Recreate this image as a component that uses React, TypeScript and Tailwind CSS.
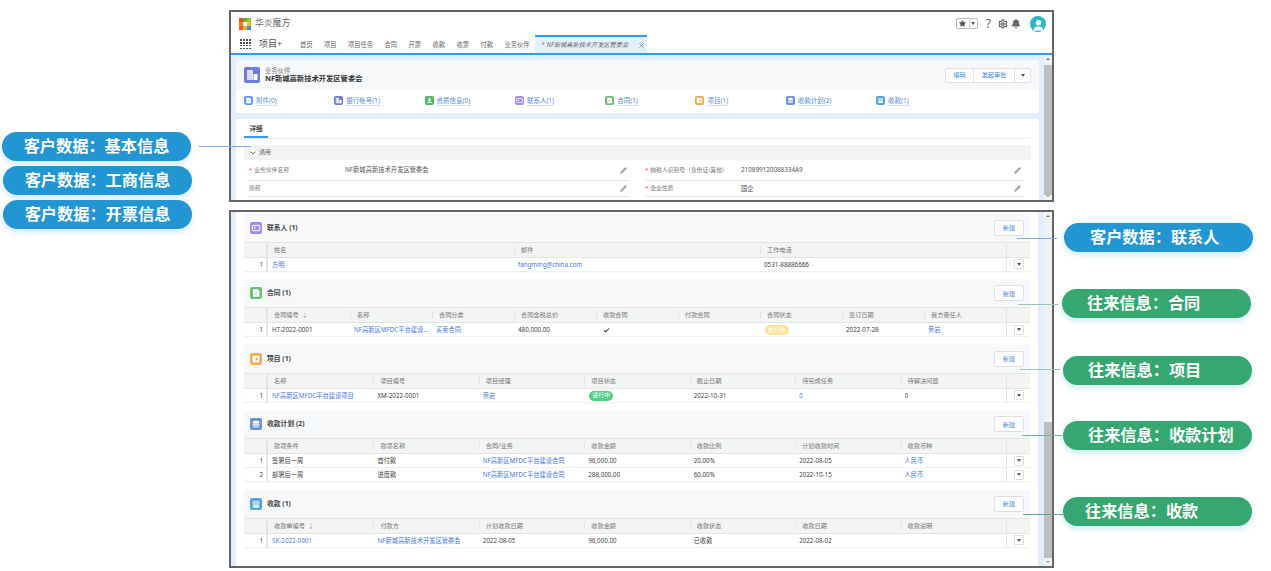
import type { ReactNode } from "react";
import { Bell, Check, ChevronDown, Pencil, Settings, Star, User, X } from "lucide-react";

type Cell = string | { link: string } | { pill: string; tone: string } | { check: true };
type Table = {
  title: string;
  tile: string;
  glyph: ReactNode;
  columns: string[];
  grid: string;
  rows: Cell[][];
  sorted?: boolean;
};

const docGlyph = (
  <svg viewBox="0 0 16 16" className="size-full" fill="#fff">
    <path d="M4 3h6l2.5 2.5V13H4z" />
    <rect x="6" y="7" width="4.5" height="1" fill="#00000040" />
    <rect x="6" y="9.5" width="4.5" height="1" fill="#00000040" />
  </svg>
);
const cardGlyph = (
  <svg viewBox="0 0 16 16" className="size-full" fill="none" stroke="#fff" strokeWidth="1.3">
    <rect x="3" y="4.5" width="10" height="7" rx="0.8" />
    <rect x="5.5" y="6.5" width="2" height="2" fill="#fff" stroke="none" />
  </svg>
);
const boxGlyph = (
  <svg viewBox="0 0 16 16" className="size-full" fill="#fff">
    <rect x="3.5" y="3.5" width="9" height="9" rx="0.8" />
    <rect x="7.5" y="6.5" width="3" height="3" fill="#f7ad52" />
  </svg>
);
const stackGlyph = (
  <svg viewBox="0 0 16 16" className="size-full" fill="#fff">
    <ellipse cx="8" cy="5.5" rx="4.5" ry="2.2" />
    <path d="M3.5 7.5c1 1.2 8 1.2 9 0v1.8c-1 1.4-8 1.4-9 0z" />
    <path d="M3.5 10.5c1 1.2 8 1.2 9 0v1c-1 1.4-8 1.4-9 0z" />
  </svg>
);
const frameGlyph = (
  <svg viewBox="0 0 16 16" className="size-full" fill="#fff">
    <path d="M3.5 3.5h9v9h-9z" opacity="0.55" />
    <path d="M3.5 12.5l3-4 2 2 1.5-1.5 2.5 3.5z" />
  </svg>
);
const buildingGlyph = (
  <svg viewBox="0 0 16 16" className="size-full" fill="#fff">
    <rect x="3" y="3" width="6" height="10" opacity="0.75" />
    <rect x="9.5" y="7" width="4" height="6" />
  </svg>
);
const downloadGlyph = (
  <svg viewBox="0 0 16 16" className="size-full" fill="#fff">
    <path d="M6.5 3h3v4h2L8 10.5 4.5 7h2z" />
    <rect x="3.5" y="11" width="9" height="1.6" />
  </svg>
);

const navItems = ["首页", "项目", "项目任务", "合同", "开票", "收款", "收票", "付款", "业务伙伴"];

const relatedLinks = [
  { label: "附件(0)", tile: "bg-[#5f9cec]", glyph: docGlyph },
  { label: "银行帐号(1)", tile: "bg-[#7079dc]", glyph: buildingGlyph },
  { label: "资质信息(0)", tile: "bg-[#4cb862]", glyph: downloadGlyph },
  { label: "联系人(1)", tile: "bg-[#a48cea]", glyph: cardGlyph },
  { label: "合同(1)", tile: "bg-[#6cc070]", glyph: docGlyph },
  { label: "项目(1)", tile: "bg-[#f7ad52]", glyph: boxGlyph },
  { label: "收款计划(2)", tile: "bg-[#6f93d8]", glyph: stackGlyph },
  { label: "收款(1)", tile: "bg-[#52a7dd]", glyph: frameGlyph },
];

const tables: Table[] = [
  {
    title: "联系人 (1)",
    tile: "bg-[#a48cea]",
    glyph: cardGlyph,
    grid: "grid-cols-[24px_repeat(3,1fr)_24px]",
    columns: ["姓名", "邮件", "工作电话"],
    rows: [[{ link: "方明" }, { link: "fangming@china.com" }, "0531-88886666"]],
  },
  {
    title: "合同 (1)",
    tile: "bg-[#6cc070]",
    glyph: docGlyph,
    grid: "grid-cols-[24px_repeat(9,1fr)_24px]",
    columns: ["合同编号", "名称", "合同分类", "合同含税总价", "收款合同", "付款合同", "合同状态", "签订日期", "我方责任人"],
    sorted: true,
    rows: [
      [
        "HT-2022-0001",
        { link: "NF高新区MFDC平台建设..." },
        { link: "买卖合同" },
        "480,000.00",
        { check: true },
        "",
        { pill: "执行中", tone: "bg-[#fde29a]" },
        "2022-07-28",
        { link: "黄岩" },
      ],
    ],
  },
  {
    title: "项目 (1)",
    tile: "bg-[#f7ad52]",
    glyph: boxGlyph,
    grid: "grid-cols-[24px_repeat(7,1fr)_24px]",
    columns: ["名称", "项目编号", "项目经理", "项目状态", "截止日期", "待完成任务", "待解决问题"],
    rows: [
      [
        { link: "NF高新区MFDC平台建设项目" },
        "XM-2022-0001",
        { link: "黄岩" },
        { pill: "进行中", tone: "bg-[#4fd08a]" },
        "2022-10-31",
        { link: "0" },
        "0",
      ],
    ],
  },
  {
    title: "收款计划 (2)",
    tile: "bg-[#6f93d8]",
    glyph: stackGlyph,
    grid: "grid-cols-[24px_repeat(7,1fr)_24px]",
    columns: ["款项条件", "款项名称", "合同/业务", "收款金额", "收款比例", "计划收款时间", "收款币种"],
    rows: [
      ["签署后一周", "首付款", { link: "NF高新区MFDC平台建设合同" }, "96,000.00", "20.00%", "2022-08-05", { link: "人民币" }],
      ["部署后一周", "进度款", { link: "NF高新区MFDC平台建设合同" }, "288,000.00", "60.00%", "2022-10-15", { link: "人民币" }],
    ],
  },
  {
    title: "收款 (1)",
    tile: "bg-[#52a7dd]",
    glyph: frameGlyph,
    grid: "grid-cols-[24px_repeat(7,1fr)_24px]",
    columns: ["收款单编号", "付款方", "计划收款日期", "收款金额", "收款状态", "收款日期", "收款说明"],
    sorted: true,
    rows: [
      [
        { link: "SK-2022-0001" },
        { link: "NF新城高新技术开发区管委会" },
        "2022-08-05",
        "96,000.00",
        "已收款",
        "2022-08-02",
        "",
      ],
    ],
  },
];

const callouts = [
  { text: "客户数据：基本信息", place: "left-[2px] top-[132px] justify-center bg-[#2196d2]" },
  { text: "客户数据：工商信息", place: "left-[3px] top-[166px] justify-center bg-[#2196d2]" },
  { text: "客户数据：开票信息", place: "left-[3px] top-[200px] justify-center bg-[#2196d2]" },
  { text: "客户数据：联系人", place: "left-[1064px] top-[223px] pl-[26px] bg-[#2196d2]" },
  { text: "往来信息：合同", place: "left-[1062px] top-[289px] pl-[25px] bg-[#36a771]" },
  { text: "往来信息：项目", place: "left-[1063px] top-[356px] pl-[25px] bg-[#36a771]" },
  { text: "往来信息：收款计划", place: "left-[1063px] top-[421px] pl-[25px] bg-[#36a771]" },
  { text: "往来信息：收款", place: "left-[1063px] top-[497px] pl-[22px] bg-[#36a771]" },
];

const leaders = [
  "left-[199px] top-[146px] w-[52px] bg-[#7fa8e8]",
  "left-[1017px] top-[238px] w-[40px] bg-[#7fa8e8]",
  "left-[1018px] top-[304px] w-[40px] bg-[#9cc6b4]",
  "left-[1020px] top-[369px] w-[40px] bg-[#9cc6b4]",
  "left-[1022px] top-[435px] w-[40px] bg-[#6fb09a]",
  "left-[1023px] top-[514px] w-[40px] bg-[#5da88a]",
];

const Tile = ({ tone, size, children }: { tone: string; size: string; children: ReactNode }) => (
  <span className={`${tone} ${size} flex shrink-0 items-center justify-center rounded-[2px]`}>{children}</span>
);

const Caret = () => (
  <span className="h-0 w-0 border-x-[2.5px] border-t-[3px] border-x-transparent border-t-[#555]" />
);

const Scrollbar = ({ thumb }: { thumb: string }) => (
  <div className="flex w-[8px] shrink-0 flex-col items-center bg-[#f1f1f1]">
    <span className="mt-[3px] h-0 w-0 shrink-0 border-x-[2px] border-b-[2.5px] border-x-transparent border-b-[#777]" />
    <div className={`${thumb} w-full bg-[#bdbdbd]`} />
    <span className="mb-[3px] h-0 w-0 shrink-0 border-x-[2px] border-t-[2.5px] border-x-transparent border-t-[#999]" />
  </div>
);

const Field = ({ label, value, required, line }: { label: string; value?: string; required?: boolean; line: string }) => (
  <div className={`${line} flex items-center border-b border-[#e6e6e6]`}>
    <span className="w-[96px] text-[5.8px] text-[#777]">
      {required && <span className="mr-[2px] text-[#e5484d]">*</span>}
      {label}
    </span>
    <span className="flex-1 text-[6.3px] text-[#555]">{value}</span>
    <Pencil size={7} className="mr-[3px] text-[#999]" fill="#aaa" />
  </div>
);

const renderCell = (cell: Cell) => {
  if (typeof cell === "string") return <span className="truncate">{cell}</span>;
  if ("link" in cell) return <span className="truncate text-[#4a78e0]">{cell.link}</span>;
  if ("pill" in cell)
    return (
      <span className={`${cell.tone} ml-px flex h-[10px] w-[24px] items-center justify-center rounded-full text-[6px] text-white`}>
        {cell.pill}
      </span>
    );
  return <Check size={7} strokeWidth={3.5} className="ml-[3px] text-[#333]" />;
};

const RelatedTable = ({ table }: { table: Table }) => (
  <section className="mb-[8px] overflow-hidden rounded-[2px] bg-white shadow-[0_0_1px_rgba(0,0,0,0.18)]">
    <header className="flex h-[27.5px] items-center bg-[#f6f8fa] pl-[6px] pr-[6px]">
      <Tile tone={table.tile} size="size-[12px]">
        {table.glyph}
      </Tile>
      <h3 className="ml-[5px] text-[6.8px] font-bold text-[#444]">{table.title}</h3>
      <button className="ml-auto h-[16px] w-[30px] rounded-[2px] border border-[#e0e0e0] bg-white text-[6.2px] text-[#4a86d8]">
        新建
      </button>
    </header>
    <div className={`${table.grid} grid h-[16px] items-center border-y border-[#e2e4e6] bg-[#f3f4f4] text-[6.2px] text-[#777]`}>
      <span className="h-full border-r-2 border-[#e2e4e6]" />
      {table.columns.map((column, i) => (
        <span key={column} className={`${i > 0 ? "border-l border-[#e4e4e4]" : ""} flex h-[8px] items-center gap-[3px] pl-[6px]`}>
          {column}
          {table.sorted && i === 0 && <span className="text-[#999]">↓</span>}
        </span>
      ))}
      <span className="h-full border-l border-[#e2e4e6]" />
    </div>
    {table.rows.map((row, r) => (
      <div key={r} className={`${table.grid} grid h-[14px] items-center border-b border-[#eef0f1] text-[6.25px] text-[#444]`}>
        <span className="flex h-full items-center justify-end border-r-2 border-[#e2e4e6] pr-[3px] pt-px">{r + 1}</span>
        {row.map((cell, c) => (
          <div key={c} className="flex min-w-0 items-center pl-[4px] pt-px">
            {renderCell(cell)}
          </div>
        ))}
        <span className="flex h-full items-center justify-center border-l border-[#e6e6e6]">
          <span className="flex size-[10px] items-center justify-center rounded-[1px] border border-[#ddd] bg-white">
            <Caret />
          </span>
        </span>
      </div>
    ))}
  </section>
);

const DetailWindow = () => (
  <div className="absolute left-[229px] top-[10px] flex h-[192px] w-[825px] flex-col overflow-hidden border-2 border-[#666] bg-white">
    <div className="flex h-[23px] shrink-0 items-center pl-[8px] pr-[6px]">
      <svg viewBox="0 0 12 12" className="size-[12px]">
        <rect width="4" height="4" fill="#e8502a" />
        <rect x="4" width="4" height="4" fill="#58b431" />
        <rect x="8" width="4" height="4" fill="#9ac42e" />
        <rect y="4" width="4" height="4" fill="#f07a1e" />
        <rect x="8" y="4" width="4" height="4" fill="#f5c21b" />
        <rect y="8" width="4" height="4" fill="#ee5a24" />
        <rect x="4" y="8" width="4" height="4" fill="#f5a81b" />
        <rect x="8" y="8" width="4" height="4" fill="#2a93e8" />
      </svg>
      <span className="ml-[4px] text-[8.8px] text-[#666]">华炎魔方</span>
      <div className="ml-auto flex h-[11px] w-[22px] items-center rounded-[1px] border border-[#bbb]">
        <span className="flex w-[13px] justify-center border-r border-[#ccc]">
          <Star size={7} fill="#555" className="text-[#555]" />
        </span>
        <span className="flex flex-1 justify-center">
          <Caret />
        </span>
      </div>
      <span className="ml-[8px] text-[12px] leading-none text-[#666]">?</span>
      <Settings size={10} strokeWidth={3} className="ml-[7px] text-[#666]" />
      <Bell size={10} fill="#666" className="ml-[3px] text-[#666]" />
      <span className="ml-[9px] flex size-[16px] items-end justify-center overflow-hidden rounded-full bg-[#2bb5c8]">
        <User size={13} fill="#fff" className="text-white" />
      </span>
    </div>
    <nav className="flex h-[20px] shrink-0 items-stretch border-b-2 border-[#2f9bf0] pl-[9px]">
      <div className="grid h-[10px] w-[11px] grid-cols-4 gap-[1.2px] self-center">
        {Array.from({ length: 16 }).map((_, i) => (
          <span key={i} className="size-[1.7px] bg-[#555]" />
        ))}
      </div>
      <span className="ml-[8px] w-[41px] self-center text-[9px] text-[#555]">项目+</span>
      <div className="flex items-center gap-[11.4px] pt-px text-[6.3px] text-[#666]">
        {navItems.map((item) => (
          <span key={item}>{item}</span>
        ))}
      </div>
      <div className="ml-[5.5px] flex w-[112px] items-center border-t-2 border-[#2f9bf0] bg-[#e3f0fc] pl-[6px] text-[6.2px] italic text-[#666]">
        <span className="mr-[2px] text-[#e5484d]">*</span>
        <span className="w-[88px]">NF新城高新技术开发区管委会</span>
        <X size={7} className="ml-[3px] text-[#555]" />
      </div>
    </nav>
    <div className="flex min-h-0 flex-1 bg-[#e2eefb]">
      <main className="w-[813px] shrink-0 px-[5px] pt-[5px]">
        <div className="overflow-hidden rounded-[2px] bg-white">
          <div className="flex h-[30px] items-center bg-[#f6f8fa] px-[8px]">
            <Tile tone="bg-[#7079dc]" size="size-[16px]">
              {buildingGlyph}
            </Tile>
            <div className="mb-[2px] ml-[5px] flex flex-col">
              <span className="text-[6.3px] leading-[7px] text-[#777]">业务伙伴</span>
              <span className="text-[7.3px] font-bold leading-[8px] text-[#333]">NF新城高新技术开发区管委会</span>
            </div>
            <div className="ml-auto flex h-[15px] items-stretch rounded-[2px] border border-[#e0e0e0] bg-white text-[6.2px] text-[#4a86d8]">
              <span className="flex w-[28px] items-center justify-center border-r border-[#e0e0e0]">编辑</span>
              <span className="flex w-[41px] items-center justify-center border-r border-[#e0e0e0]">发起审批</span>
              <span className="flex w-[15px] items-center justify-center">
                <Caret />
              </span>
            </div>
          </div>
          <div className="flex h-[23px] items-center px-[8px] pb-[2px]">
            {relatedLinks.map((link) => (
              <span key={link.label} className="flex w-[90.3px] items-center gap-[3px]">
                <Tile tone={link.tile} size="size-[9px]">
                  {link.glyph}
                </Tile>
                <span className="border-b border-[#cfe0f5] text-[6.5px] leading-[9px] text-[#5b8ad0]">{link.label}</span>
              </span>
            ))}
          </div>
        </div>
        <div className="mt-[6px] rounded-[2px] bg-white px-[8px] pb-[4px]">
          <div className="flex h-[20px] items-stretch border-b border-[#ececec]">
            <span className="flex w-[24px] items-center justify-center border-b-2 border-[#2f9bf0] pt-[2px] text-[6.5px] font-bold text-[#444]">
              详细
            </span>
          </div>
          <div className="mt-[6px] flex h-[15px] items-center rounded-[2px] bg-[#f3f3f3] pl-[5px] text-[6px] text-[#666]">
            <ChevronDown size={8} strokeWidth={2.5} className="text-[#555]" />
            <span className="ml-[2px]">通用</span>
          </div>
          <div className="grid grid-cols-[381px_379px] gap-x-[15px] pl-[5px]">
            <Field required line="h-[21px]" label="业务伙伴名称" value="NF新城高新技术开发区管委会" />
            <Field required line="h-[21px]" label="纳税人识别号（身份证/其他）" value="210899120088334A9" />
            <Field line="h-[16px]" label="简称" />
            <Field required line="h-[16px]" label="企业性质" value="国企" />
          </div>
        </div>
      </main>
      <Scrollbar thumb="mt-[5px] flex-1" />
    </div>
  </div>
);

const RelatedWindow = () => (
  <div className="absolute left-[229px] top-[210px] flex h-[358px] w-[825px] overflow-hidden border-2 border-[#666] bg-[#e2eefb]">
    <div className="ml-[5px] h-full w-[802px] bg-white px-[8px] pt-[2px]">
      {tables.map((table) => (
        <RelatedTable key={table.title} table={table} />
      ))}
    </div>
    <div className="flex-1" />
    <Scrollbar thumb="mt-auto mb-[3px] h-[136px]" />
  </div>
);

export default function App() {
  return (
    <div className="relative h-[571px] w-[1271px] overflow-hidden bg-white [font-family:'Noto_Sans','Noto_Sans_CJK_SC',sans-serif]">
      <DetailWindow />
      <RelatedWindow />
      {leaders.map((place) => (
        <span key={place} className={`${place} absolute h-px`} />
      ))}
      {callouts.map((callout) => (
        <div
          key={callout.text}
          className={`${callout.place} absolute flex h-[28.5px] w-[189px] items-center rounded-full text-[16.2px] font-bold text-white shadow-[0_3px_6px_rgba(33,150,210,0.22)]`}
        >
          {callout.text}
        </div>
      ))}
    </div>
  );
}
